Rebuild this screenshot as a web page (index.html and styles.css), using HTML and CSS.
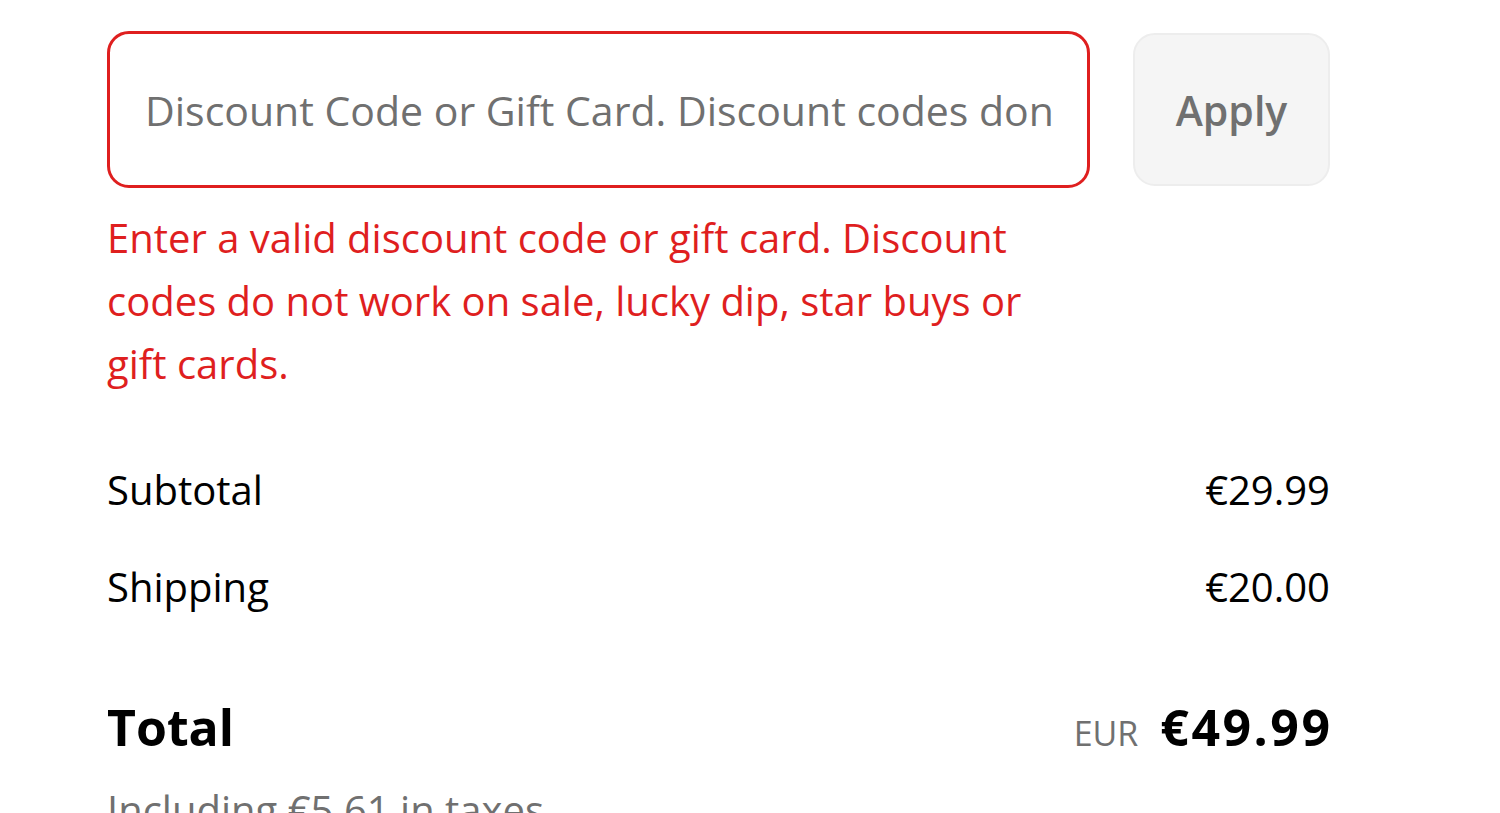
FILE: index.html
```html
<!DOCTYPE html>
<html lang="en">
<head>
  <meta charset="UTF-8" />
  <meta name="viewport" content="width=device-width, initial-scale=1.0"/>
  <title>Checkout</title>
  <link rel="stylesheet" href="styles.css">
</head>
<body>
  <div class="summary">
    <div class="discount-row">
      <input class="discount-input" type="text" placeholder="Discount Code or Gift Card. Discount codes don't work on sale items">
      <button class="apply-btn" disabled>Apply</button>
    </div>
    <p class="error-text">Enter a valid discount code or gift card. Discount codes do not work on sale, lucky dip, star buys or gift cards.</p>

    <div class="line-items">
      <div class="line">
        <span>Subtotal</span>
        <span>€29.99</span>
      </div>
      <div class="line">
        <span>Shipping</span>
        <span>€20.00</span>
      </div>
    </div>

    <div class="total-row">
      <span class="total-label">Total</span>
      <span class="total-price"><span class="currency">EUR</span><span class="amount">€49.99</span></span>
    </div>
    <div class="taxes">Including €5.61 in taxes</div>
  </div>
</body>
</html>
```

FILE: styles.css
```css
body {
  margin: 0;
  font-family: "Open Sans", "Noto Sans", Arial, sans-serif;
  background-color: #fff;
  color: #000;
  overflow: hidden;
}
.summary {
  width: 1223px;
  padding: 31px 0 0 107px;
}
.discount-row {
  display: flex;
  align-items: center;
  gap: 43px;
}
.discount-input {
  flex: 1;
  height: 157px;
  box-sizing: border-box;
  border: 3px solid #df1f1f;
  border-radius: 22px;
  padding: 0 34px 0 35px;
  font-family: inherit;
  font-size: 41px;
  color: #000;
  outline: none;
}
.discount-input::placeholder {
  color: #707070;
}
.apply-btn {
  width: 197px;
  height: 153px;
  box-sizing: border-box;
  border: 2px solid #ededed;
  border-radius: 22px;
  background-color: #f5f5f5;
  color: #707070;
  font-family: inherit;
  font-size: 41px;
  font-weight: 600;
}
.error-text {
  margin: 18px 0 0;
  width: 935px;
  color: #df1f1f;
  font-size: 40px;
  line-height: 63px;
}
.line-items {
  margin-top: 68px;
  display: flex;
  flex-direction: column;
  gap: 43px;
}
.line {
  display: flex;
  justify-content: space-between;
  font-size: 40px;
  line-height: 54px;
}
.total-row {
  margin-top: 81px;
  display: flex;
  justify-content: space-between;
  align-items: baseline;
  line-height: 64px;
}
.total-label, .amount {
  font-size: 50px;
  font-weight: 700;
}
.amount {
  letter-spacing: 2.5px;
  margin-right: -2.5px;
}
.currency {
  font-size: 34px;
  color: #707070;
  margin-right: 22px;
}
.taxes {
  margin-top: 11px;
  font-size: 40px;
  line-height: 54px;
  color: #707070;
}
```
